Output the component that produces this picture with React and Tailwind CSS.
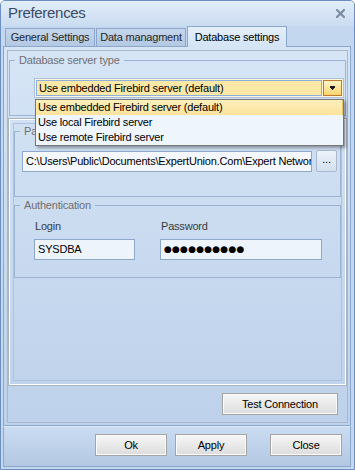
import React from 'react'

function GroupBox({ label, className = '', children }) {
  return (
    <fieldset className={`border border-[#9cb4d2] ${className}`}>
      <legend className="ml-[5px] px-[4px] text-[11px] leading-[14px] text-[#707070]">{label}</legend>
      {children}
    </fieldset>
  )
}

function Button({ children, className = '' }) {
  return (
    <button className={`h-[22px] border border-[#a4a4a4] bg-linear-to-b from-[#f7f7f7] to-[#dcdcdc] shadow-[inset_0_0_0_1px_#fbfbfb] text-[11px] text-black ${className}`}>
      {children}
    </button>
  )
}

function TextBox({ children, className = '' }) {
  return (
    <div className={`h-[21px] border border-[#8ea8cb] bg-[#eef4fb] flex items-center pl-[3px] overflow-hidden whitespace-nowrap ${className}`}>
      {children}
    </div>
  )
}

export default function App() {
  const options = [
    'Use embedded Firebird server (default)',
    'Use local Firebird server',
    'Use remote Firebird server',
  ]

  return (
    <div className="w-[355px] h-[470px] flex flex-col bg-[#c3d7ef] border border-[#6c8fc1] rounded-t-[5px] overflow-hidden font-['Liberation_Sans',sans-serif] text-[11px] tracking-[-0.2px] text-black">
      {/* Title bar */}
      <div className="h-[25px] shrink-0 flex items-center justify-between pl-[7px] pr-[9px] bg-linear-to-b from-[#e2edf9] to-[#cadcf1]">
        <span className="text-[15px] tracking-[-0.3px] text-[#3a4b62]">Preferences</span>
        <svg width="9" height="9" viewBox="0 0 9 9">
          <path d="M1 1L8 8M8 1L1 8" stroke="#7d8ba1" strokeWidth="2.2" strokeLinecap="square" />
        </svg>
      </div>

      {/* Tabs */}
      <div className="h-[20px] shrink-0 flex items-end gap-[1px] pl-[4px] relative z-10">
        <div className="w-[90px] h-[18px] flex items-center justify-center border border-b-0 border-[#8ca7cb] bg-linear-to-b from-[#c4d6ec] to-[#b3c8e2] text-[#262626]">
          General Settings
        </div>
        <div className="w-[90px] h-[18px] flex items-center justify-center border border-b-0 border-[#8ca7cb] bg-linear-to-b from-[#c4d6ec] to-[#b3c8e2] text-[#262626]">
          Data managment
        </div>
        <div className="w-[100px] h-[21px] -mb-[1px] flex items-center justify-center border border-b-0 border-[#8ca7cb] bg-linear-to-b from-[#e4eef9] to-[#d4e4f5] text-black">
          Database settings
        </div>
      </div>

      {/* Tab page */}
      <div className="ml-[2px] w-[348px] h-[380px] shrink-0 border border-[#8ba7cc] bg-linear-to-b from-[#d6e5f6] to-[#bdd1ea] pl-[3px] pr-[2px] pt-[3px] pb-[2px]">
        <div className="h-full border border-[#a9b7c8] flex flex-col">
          {/* Database server type */}
          <GroupBox label="Database server type" className="mx-[1px] mt-[2px]">
            <div className="relative mt-[11px] mb-[17px] ml-[24px] mr-[1px] h-[20px] border border-[#aac0dc] bg-[#fff6d8] p-[1px] flex">
              <div className="flex-1 border border-[#8eaedb] bg-[#fce8a6] flex items-center pl-[2px] whitespace-nowrap">
                Use embedded Firebird server (default)
              </div>
              <div className="w-[19px] ml-[1px] border border-[#c4772d] bg-linear-to-b from-[#fff3c6] to-[#fbd56c] flex items-center justify-center">
                <svg width="5" height="4" viewBox="0 0 5 4">
                  <path d="M0 0h5v1H0zM0 1h5v1H0zM1 2h3v1H1zM2 3h1v1H2z" fill="#1b1b1b" />
                </svg>
              </div>

              {/* Open dropdown list */}
              <div className="absolute top-[20px] left-0 right-[-1px] z-20 border border-[#777] bg-[#eef5fd] shadow-[2px_2px_3px_rgba(0,0,0,0.35)]">
                {options.map((o, i) => (
                  <div
                    key={o}
                    className={`h-[15px] flex items-center pl-[2px] whitespace-nowrap ${i === 0 ? 'bg-linear-to-b from-[#fdefbb] to-[#fbe39c] border-r border-[#e6c46a]' : ''}`}
                  >
                    {o}
                  </div>
                ))}
              </div>
            </div>
          </GroupBox>

          {/* Path + authentication frame */}
          <div className="mx-[1px] mt-[3px] h-[266px] border border-white shadow-[0_0_0_1px_#a9b3bf] p-[3px]">
            <div className="h-full border border-[#abc4e6] flex flex-col">
              <GroupBox label="Path">
                <div className="mt-[12px] mb-[24px] ml-[7px] flex items-center">
                  <TextBox className="w-[290px] bg-[#f4f8fd]">
                    C:\Users\Public\Documents\ExpertUnion.Com\Expert Network
                  </TextBox>
                  <button className="ml-[4px] w-[21px] h-[22px] rounded-[2px] border border-[#a9b9cd] bg-linear-to-b from-[#edf3fa] to-[#d3e0ef] text-[11px] leading-none pb-[4px]">
                    ...
                  </button>
                </div>
              </GroupBox>

              <GroupBox label="Authentication" className="mt-[1px]">
                <div className="mt-[7px] mb-[17px] ml-[19px] flex gap-[25px]">
                  <div className="flex flex-col">
                    <span className="pl-[1px] leading-[14px] text-[#3a3a3a]">Login</span>
                    <TextBox className="mt-[6px] w-[101px]">SYSDBA</TextBox>
                  </div>
                  <div className="flex flex-col">
                    <span className="pl-[1px] leading-[14px] text-[#3a3a3a]">Password</span>
                    <TextBox className="mt-[6px] w-[162px]">
                      <span className="font-['DejaVu_Sans',sans-serif] text-[9px] tracking-[0.2px]">●●●●●●●●●●</span>
                    </TextBox>
                  </div>
                </div>
              </GroupBox>
            </div>
          </div>

          <div className="mt-[8px] mr-[9px] flex justify-end">
            <Button className="w-[116px]">Test Connection</Button>
          </div>
        </div>
      </div>

      {/* Bottom buttons */}
      <div className="ml-[2px] w-[348px] h-[41px] shrink-0 border border-[#8ba7cc] border-t-[#dfeaf7] bg-linear-to-b from-[#cadcf2] to-[#b3c8e2] pt-[7px] flex items-start">
        <Button className="ml-[91px] w-[72px]">Ok</Button>
        <Button className="ml-[8px] w-[72px]">Apply</Button>
        <Button className="ml-[23px] w-[72px]">Close</Button>
      </div>
    </div>
  )
}
